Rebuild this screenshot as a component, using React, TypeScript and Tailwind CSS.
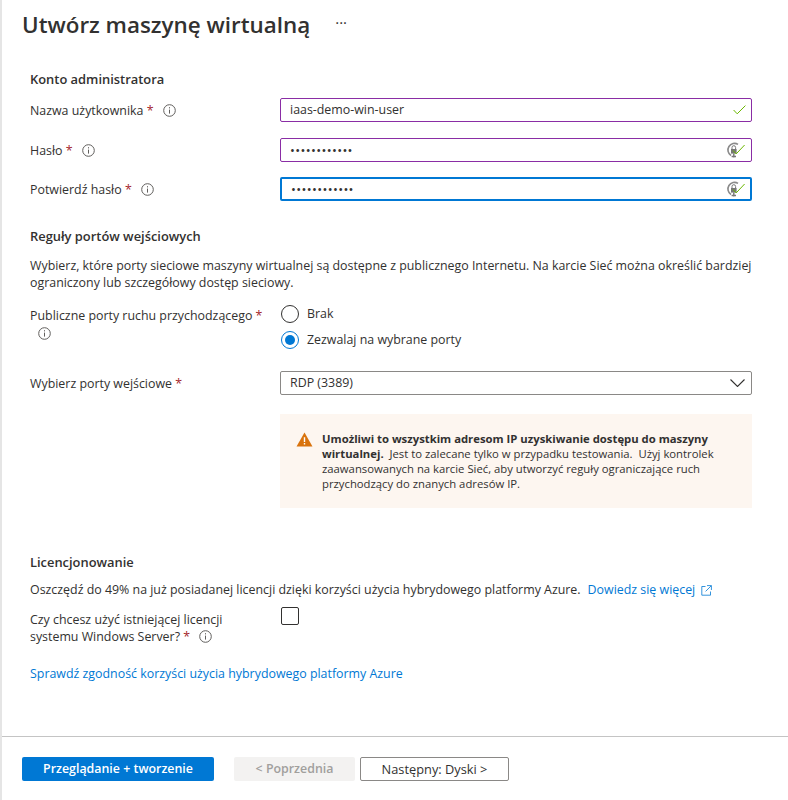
const font = "font-['Open_Sans','Liberation_Sans',sans-serif]"

function InfoIcon() {
  return (
    <svg width="13" height="13" viewBox="0 0 13 13" fill="none" className="shrink-0" aria-hidden="true">
      <circle cx="6.5" cy="6.5" r="5.8" stroke="#605e5c" />
      <path d="M6.5 5.6v4" stroke="#605e5c" />
      <path d="M6.5 3.2v1.2" stroke="#605e5c" />
    </svg>
  )
}

function Check() {
  return (
    <svg width="13" height="10" viewBox="0 0 13 10" fill="none" aria-hidden="true">
      <path d="M.6 5l3.6 3.8L12.4.6" stroke="#6bb700" />
    </svg>
  )
}

function KeyCheck() {
  return (
    <svg width="20" height="18" viewBox="0 0 20 18" fill="none" aria-hidden="true">
      <path d="M5 14.5A6 6 0 1 1 12 3.4" stroke="#8a8a8a" strokeWidth="1.6" />
      <path d="M6 8V6.5a1.8 1.8 0 0 1 3.6 0V8" stroke="#777" />
      <rect x="5" y="8" width="5.6" height="4.6" fill="#777" />
      <path d="M7.8 12.5v4M5.6 15.5h4.4" stroke="#777" strokeWidth="1.4" />
      <path d="M7 9.5l3.2 3.4L18.6 4" stroke="#6bb700" />
    </svg>
  )
}

function Label({ children, info = true }: { children: string; info?: boolean }) {
  return (
    <div className="flex w-[250px] shrink-0 items-center gap-[9px] pt-px text-[#323130]">
      <span>
        {children} <span className="text-[#a4262c]">*</span>
      </span>
      {info && <InfoIcon />}
    </div>
  )
}

function TextRow({ label, value, focus, secret, className }: { label: string; value: string; focus?: boolean; secret?: boolean; className?: string }) {
  return (
    <div className={`flex items-center ${className ?? ""}`}>
      <Label>{label}</Label>
      <div
        className={`flex h-6 w-[472px] items-center justify-between rounded-[2px] pl-[9px] ${
          focus ? "border-2 border-[#0078d4]" : "border border-[#8a2da5]"
        } ${secret ? (focus ? "pr-[4px]" : "pr-[5px]") : "pr-[5px]"}`}
      >
        {secret ? (
          <span className="text-[13px] tracking-[0.35px] text-[#323130]">{value}</span>
        ) : (
          <span className="text-[#323130]">{value}</span>
        )}
        {secret ? <KeyCheck /> : <Check />}
      </div>
    </div>
  )
}

function Heading({ children, className }: { children: string; className?: string }) {
  return <h2 className={`text-[12.9px] font-semibold text-[#323130] ${className ?? ""}`}>{children}</h2>
}

export default function App() {
  return (
    <div className={`${font} flex h-[800px] w-[788px] overflow-hidden bg-white text-[12.4px] leading-4 text-[#323130]`}>
      <div className="w-[2px] shrink-0 bg-[#e5e5e5]" />
      <div className="flex min-w-0 flex-1 flex-col">
        <header className="flex h-[52px] items-center pb-[3px] pl-5">
          <h1 className="text-[22.4px] font-semibold leading-6 text-[#323130]">Utwórz maszynę wirtualną</h1>
          <span className="ml-[25px] pb-[6px] text-[15px] text-[#323130]">···</span>
        </header>

        <main className="flex-1 pl-7 pr-9 pt-[19px]">
          <Heading>Konto administratora</Heading>
          <TextRow className="mt-[11px]" label="Nazwa użytkownika" value="iaas-demo-win-user" />
          <TextRow className="mt-4" label="Hasło" value="••••••••••••" secret />
          <TextRow className="mt-[15px]" label="Potwierdź hasło" value="••••••••••••" secret focus />

          <Heading className="mt-[27px]">Reguły portów wejściowych</Heading>
          <p className="mt-[13px] w-[730px] leading-[17px]">
            Wybierz, które porty sieciowe maszyny wirtualnej są dostępne z publicznego Internetu. Na karcie Sieć można określić bardziej ograniczony lub szczegółowy dostęp sieciowy.
          </p>

          <div className="mt-[13px] flex">
            <div className="w-[250px] shrink-0 pt-1 text-[#323130]">
              <div>
                Publiczne porty ruchu przychodzącego <span className="text-[#a4262c]">*</span>
              </div>
              <div className="mt-[3px] flex items-center">
                <span className="ml-[8px] flex"><InfoIcon /></span>
              </div>
            </div>
            <div className="flex flex-col gap-[8px] pl-px pt-px">
              <label className="flex h-[18px] items-center gap-2">
                <span className="h-[18px] w-[18px] rounded-full border border-[#323130]" />
                Brak
              </label>
              <label className="flex h-[18px] items-center gap-2">
                <span className="flex h-[18px] w-[18px] items-center justify-center rounded-full border border-[#0078d4]">
                  <span className="h-[10px] w-[10px] rounded-full bg-[#0078d4]" />
                </span>
                Zezwalaj na wybrane porty
              </label>
            </div>
          </div>

          <div className="mt-[22px] flex items-center">
            <Label info={false}>Wybierz porty wejściowe</Label>
            <div className="flex h-6 w-[472px] items-center justify-between rounded-[2px] border border-[#8a8886] pl-[9px] pr-[6px]">
              <span>RDP (3389)</span>
              <svg width="15" height="8" viewBox="0 0 15 8" fill="none" aria-hidden="true">
                <path d="M.5.5l7 7 7-7" stroke="#323130" strokeWidth="1.1" />
              </svg>
            </div>
          </div>

          <div className="mt-[19px] ml-[250px] flex h-[94px] w-[472px] gap-[9px] bg-[#fdf6f0] pl-4 pt-[17px] text-[11.3px] leading-[15px]">
            <svg width="17" height="15" viewBox="0 0 18 16" className="mt-[1px] shrink-0" aria-hidden="true">
              <path d="M9 .5L17.5 15.5H.5z" fill="#d9730d" />
              <path d="M9 5.5v5.2M9 11.8v1.6" stroke="#fff" strokeWidth="1.5" />
            </svg>
            <p className="w-[420px]">
              <strong className="font-bold">Umożliwi to wszystkim adresom IP uzyskiwanie dostępu do maszyny wirtualnej.</strong>
              &nbsp; Jest to zalecane tylko w przypadku testowania.&nbsp; Użyj kontrolek zaawansowanych na karcie Sieć, aby utworzyć reguły ograniczające ruch przychodzący do znanych adresów IP.
            </p>
          </div>

          <Heading className="mt-[46px]">Licencjonowanie</Heading>
          <p className="mt-[12px] flex items-center gap-[7px] whitespace-nowrap">
            Oszczędź do 49% na już posiadanej licencji dzięki korzyści użycia hybrydowego platformy Azure.
            <a className="flex items-center gap-[6px] text-[#0078d4]">
              Dowiedz się więcej
              <svg width="11" height="11" viewBox="0 0 11 11" fill="none" stroke="#0078d4" strokeWidth="0.8" aria-hidden="true">
                <path d="M4.5 1.5H.8v8.7h8.7V6.5M6 .6h4.4V5M10.2.8L4.6 6.4" />
              </svg>
            </a>
          </p>

          <div className="mt-2 flex">
            <div className="w-[250px] shrink-0 pt-1 leading-[17px]">
              <div className="pt-[1px]">Czy chcesz użyć istniejącej licencji</div>
              <div className="flex items-center gap-[9px]">
                <span>
                  systemu Windows Server? <span className="text-[#a4262c]">*</span>
                </span>
                <InfoIcon />
              </div>
            </div>
            <span className="ml-[1px] mt-[1px] h-[18px] w-[18px] rounded-[2px] border border-[#323130]" />
          </div>

          <a className="mt-[21px] block text-[#0078d4]">Sprawdź zgodność korzyści użycia hybrydowego platformy Azure</a>
        </main>

        <footer className="flex h-[64px] gap-[20px] border-t border-[#c4c4c4] pl-5 pt-[20px]">
          <button className="h-6 w-[192px] rounded-[2px] bg-[#0078d4] font-semibold text-white">Przeglądanie + tworzenie</button>
          <div className="flex gap-[5px]">
            <button className="h-6 w-[121px] rounded-[2px] bg-[#f3f2f1] font-semibold text-[#a19f9d]">&lt; Poprzednia</button>
            <button className="h-6 w-[149px] rounded-[2px] border border-[#8a8886] text-[12.8px] text-[#323130]">Następny: Dyski &gt;</button>
          </div>
        </footer>
      </div>
    </div>
  )
}
